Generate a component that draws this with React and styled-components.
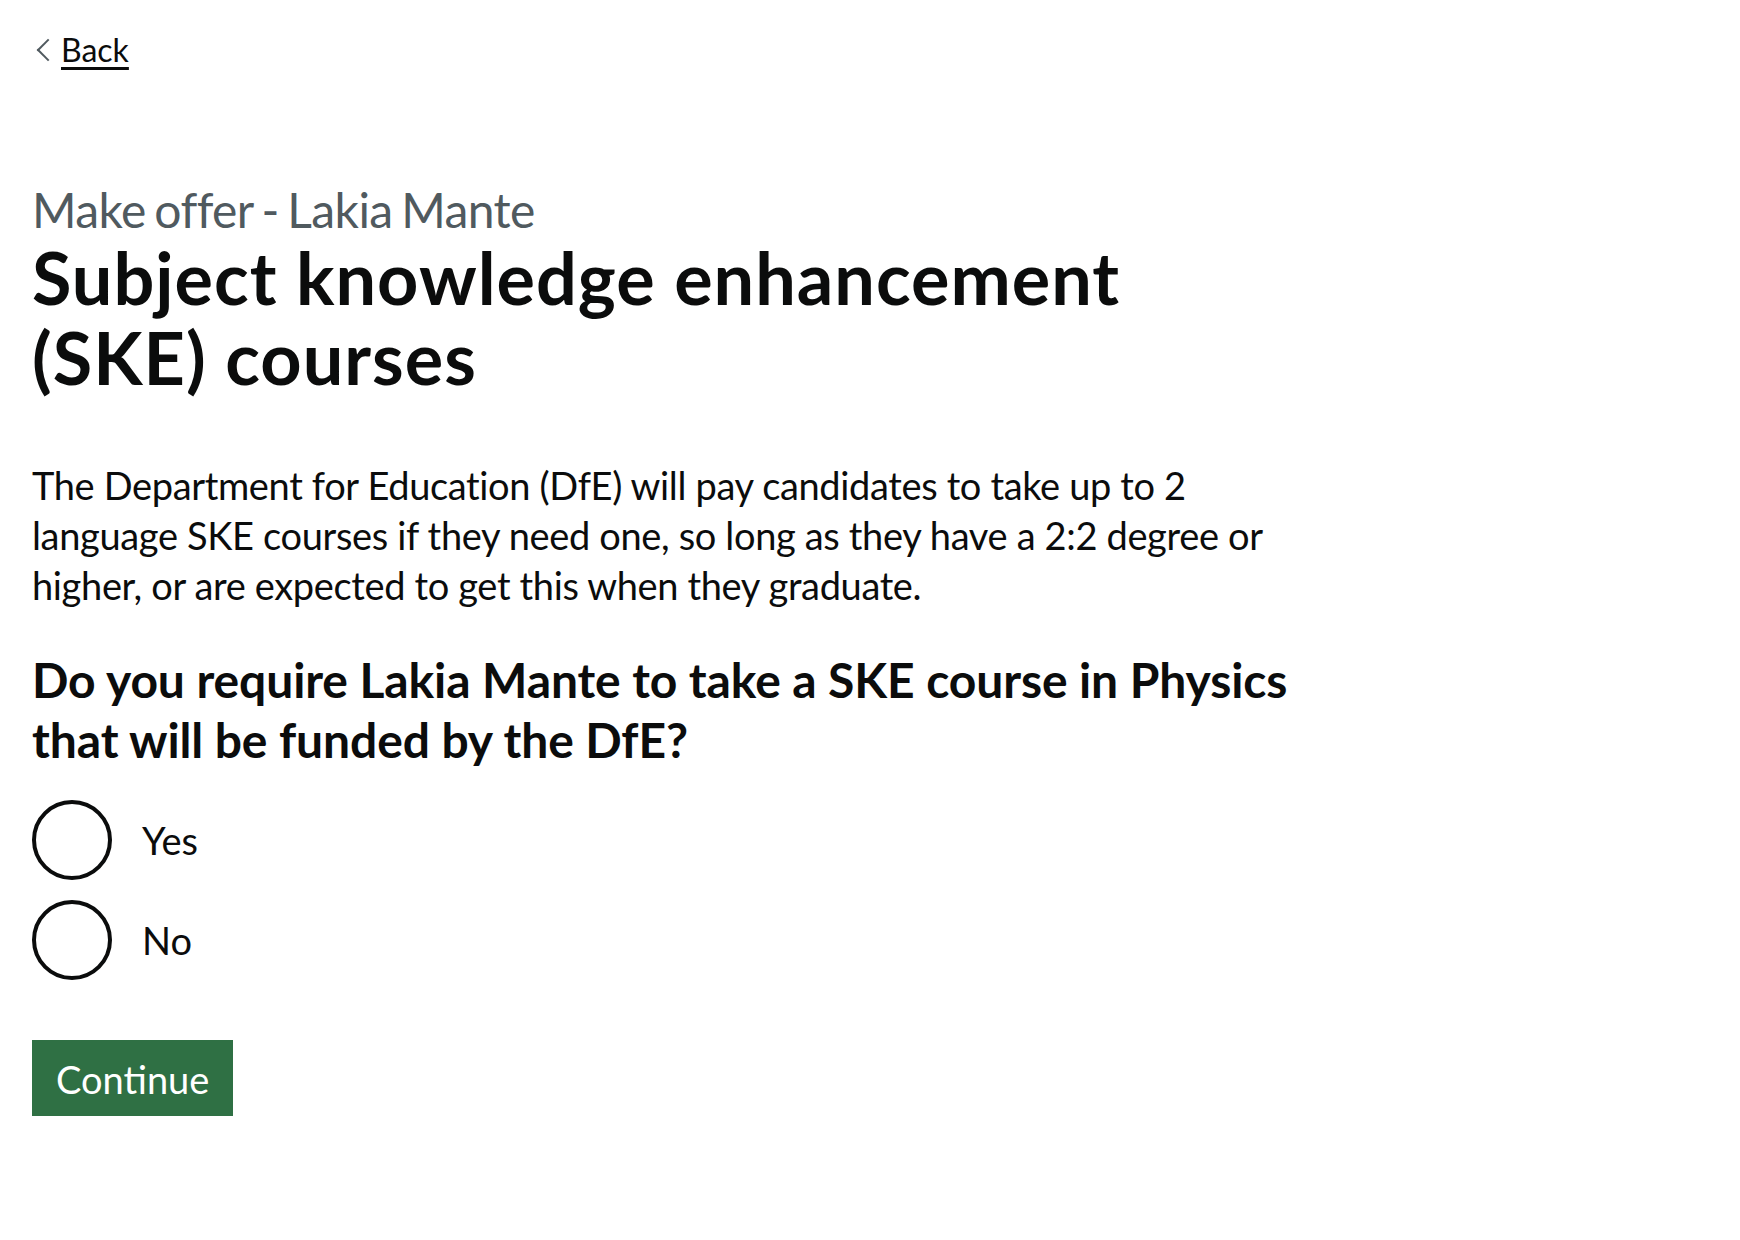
import React from 'react'
import styled, { createGlobalStyle } from 'styled-components'

const GlobalStyle = createGlobalStyle`
  body {
    margin: 0;
    background: #ffffff;
    color: #0b0c0c;
    font-family: Lato, "Noto Sans", Arial, sans-serif;
  }
`

const Page = styled.div`
  padding: 0 32px;
`

const BackLink = styled.a`
  display: inline-block;
  position: relative;
  margin: 30px 0 30px;
  padding-left: 29px;
  font-size: 32px;
  line-height: 40px;
  color: #0b0c0c;
  text-decoration: underline;
  text-decoration-thickness: 3px;
  text-underline-offset: 5px;

  &::before {
    content: '';
    position: absolute;
    left: 8px;
    top: 0;
    bottom: 0;
    margin: auto;
    width: 14px;
    height: 14px;
    border-style: solid;
    border-color: #505a5f;
    border-width: 2px 0 0 2px;
    transform: rotate(-45deg);
  }
`

const Main = styled.main`
  padding-top: 80px;
  max-width: 1266px;
`

const Caption = styled.span`
  display: block;
  margin-bottom: 0;
  font-size: 48px;
  line-height: 60px;
  letter-spacing: -0.6px;
  word-spacing: -3px;
  color: #505a5f;
`

const Heading = styled.h1`
  margin: -3px 0 63px;
  font-size: 72px;
  line-height: 80px;
  font-weight: 700;
  letter-spacing: 1px;
`

const Body = styled.p`
  margin: 0 0 40px;
  font-size: 38px;
  line-height: 50px;
  letter-spacing: -0.35px;
`

const Fieldset = styled.fieldset`
  margin: 0 0 60px;
  padding: 0;
  border: 0;
`

const Legend = styled.legend`
  padding: 0;
  margin-bottom: 30px;
  font-size: 48px;
  line-height: 60px;
  font-weight: 700;
  letter-spacing: -0.1px;
`

const Radios = styled.div`
  display: flex;
  flex-direction: column;
  gap: 20px;
`

const RadioItem = styled.label`
  display: flex;
  align-items: center;
  min-height: 80px;
  cursor: pointer;
`

const Circle = styled.span`
  flex: none;
  box-sizing: border-box;
  width: 80px;
  height: 80px;
  border: 4px solid #0b0c0c;
  border-radius: 50%;
  background: #ffffff;
`

const RadioLabel = styled.span`
  padding: 13px 30px;
  font-size: 38px;
  line-height: 50px;
`

const Button = styled.button`
  display: inline-block;
  box-sizing: border-box;
  margin: 0;
  padding: 16px 20px 14px;
  border: 4px solid transparent;
  border-radius: 0;
  background: #2f7044;
  box-shadow: 0 4px 0 #0e2b18;
  color: #ffffff;
  font-family: inherit;
  font-size: 38px;
  line-height: 38px;
  cursor: pointer;
`

const options = ['Yes', 'No']

export default function App() {
  return (
    <>
      <GlobalStyle />
      <Page>
        <BackLink href="#">Back</BackLink>
        <Main>
          <Caption>Make offer - Lakia Mante</Caption>
          <Heading>Subject knowledge enhancement (SKE) courses</Heading>
          <Body>
            The Department for Education (DfE) will pay candidates to take up to 2 language SKE
            courses if they need one, so long as they have a 2:2 degree or higher, or are expected
            to get this when they graduate.
          </Body>
          <Fieldset>
            <Legend>Do you require Lakia Mante to take a SKE course in Physics that will be funded by the DfE?</Legend>
            <Radios>
              {options.map((o) => (
                <RadioItem key={o}>
                  <Circle />
                  <RadioLabel>{o}</RadioLabel>
                </RadioItem>
              ))}
            </Radios>
          </Fieldset>
          <Button type="button">Continue</Button>
        </Main>
      </Page>
    </>
  )
}
